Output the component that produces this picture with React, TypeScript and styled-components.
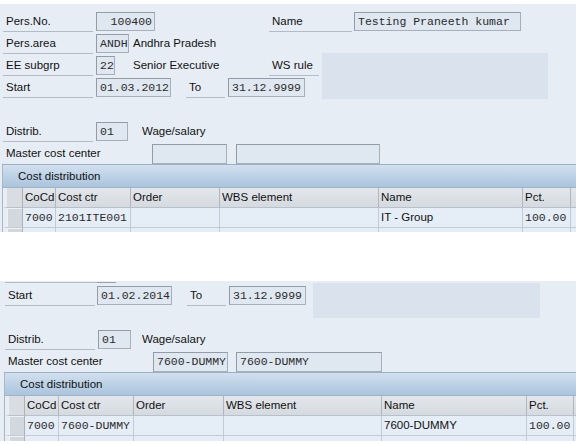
import React from "react";
import styled, { createGlobalStyle } from "styled-components";

const GlobalStyle = createGlobalStyle`
  html, body {
    margin: 0;
    padding: 0;
    background: #ffffff;
  }
  body {
    font-family: "Liberation Sans", Arial, sans-serif;
    font-size: 11.5px;
    color: #111;
  }
`;

const Page = styled.div`
  width: 576px;
  height: 444px;
  overflow: hidden;
  display: flex;
  flex-direction: column;
`;

const Panel = styled.section<{ $h: number; $pad: number; $mt: number; $pt?: number }>`
  height: ${(p) => p.$h}px;
  margin-top: ${(p) => p.$mt}px;
  padding-left: ${(p) => p.$pad}px;
  padding-top: ${(p) => p.$pt ?? 0}px;
  box-sizing: border-box;
  background: #e7edf4;
  overflow: hidden;
  flex-shrink: 0;
`;

const Row = styled.div<{ $h?: number; $mt?: number; $end?: boolean }>`
  display: flex;
  align-items: ${(p) => (p.$end ? "flex-end" : "center")};
  height: ${(p) => p.$h ?? 22}px;
  margin-top: ${(p) => p.$mt ?? 0}px;
  flex-shrink: 0;
`;

const Label = styled.div<{ $w: number; $ml?: number; $plain?: boolean }>`
  width: ${(p) => p.$w}px;
  margin-left: ${(p) => p.$ml ?? 0}px;
  height: 100%;
  box-sizing: border-box;
  padding-left: 3px;
  display: flex;
  align-items: center;
  white-space: nowrap;
  flex-shrink: 0;
  border-bottom: 1px solid ${(p) => (p.$plain ? "transparent" : "#b3bcc6")};
`;

const Field = styled.div<{ $w: number; $ml?: number; $h?: number; $right?: boolean }>`
  width: ${(p) => p.$w}px;
  height: ${(p) => p.$h ?? 19}px;
  margin-left: ${(p) => p.$ml ?? 0}px;
  box-sizing: border-box;
  flex-shrink: 0;
  border: 1px solid #a7afb8;
  border-top-color: #939ca6;
  border-left-color: #939ca6;
  background: #dfe7f0;
  color: #2b2b2b;
  font-family: "Liberation Mono", "Courier New", monospace;
  font-size: 11.5px;
  line-height: ${(p) => (p.$h ?? 19) - 2}px;
  padding: 0 2px 0 3px;
  text-align: ${(p) => (p.$right ? "right" : "left")};
  white-space: nowrap;
  overflow: hidden;
`;

const Desc = styled.span<{ $w?: number; $ml?: number }>`
  margin-left: ${(p) => p.$ml ?? 0}px;
  width: ${(p) => (p.$w ? `${p.$w}px` : "auto")};
  white-space: nowrap;
  flex-shrink: 0;
`;

const Split = styled.div`
  display: flex;
  align-items: flex-start;
  flex-shrink: 0;
`;

const Column = styled.div<{ $w: number; $mt?: number }>`
  width: ${(p) => p.$w}px;
  margin-top: ${(p) => p.$mt ?? 0}px;
  display: flex;
  flex-direction: column;
  flex-shrink: 0;
`;

const InfoBox = styled.div<{ $w: number; $h: number; $ml: number; $mt?: number }>`
  width: ${(p) => p.$w}px;
  height: ${(p) => p.$h}px;
  margin-left: ${(p) => p.$ml}px;
  margin-top: ${(p) => p.$mt ?? 0}px;
  background: #dae3ed;
  flex-shrink: 0;
`;

const Stub = styled.div`
  display: flex;
  height: 2px;
  flex-shrink: 0;
`;

const StubLine = styled.div<{ $w: number; $dark?: boolean }>`
  width: ${(p) => p.$w}px;
  height: 2px;
  box-sizing: border-box;
  border-bottom: 1px solid ${(p) => (p.$dark ? "#98a1ab" : "#b3bcc6")};
`;

const Table = styled.div`
  margin-left: -1px;
  width: max-content;
  border-top: 1px solid #9aafc3;
  border-left: 1px solid #a9b6c3;
`;

const TitleBar = styled.div`
  height: 23px;
  line-height: 23px;
  padding-left: 15px;
  background: linear-gradient(#d2e0ee, #b9cfe4 60%, #abc5dd);
  border-bottom: 1px solid #9fb3c6;
  box-sizing: border-box;
  width: 580px;
`;

const Grid = styled.div<{ $cols: string }>`
  display: grid;
  grid-template-columns: ${(p) => p.$cols};
`;

const HeadCell = styled.div`
  height: 20px;
  line-height: 19px;
  box-sizing: border-box;
  padding-left: 2px;
  background: linear-gradient(#e3e7eb, #d5dae0);
  border-right: 1px solid #aeb6bf;
  border-bottom: 1px solid #b8c0c8;
  white-space: nowrap;
  overflow: hidden;
`;

const Cell = styled.div<{ $sans?: boolean }>`
  height: 20px;
  line-height: 19px;
  box-sizing: border-box;
  padding-left: 2px;
  background: #e5edf6;
  border-right: 1px solid #c3ccd6;
  border-bottom: 1px solid #c3ccd6;
  color: ${(p) => (p.$sans ? "#111" : "#2b2b2b")};
  font-family: ${(p) =>
    p.$sans ? '"Liberation Sans", Arial, sans-serif' : '"Liberation Mono", "Courier New", monospace'};
  font-size: 11.5px;
  white-space: nowrap;
  overflow: hidden;
`;

const SelCell = styled.div<{ $head?: boolean }>`
  height: 20px;
  box-sizing: border-box;
  border-left: 4px solid #e9eef4;
  border-bottom: 1px solid ${(p) => (p.$head ? "#b8c0c8" : "#c3ccd6")};
  border-right: 1px solid #aab2bb;
  background: ${(p) => (p.$head ? "#d9dde2" : "#d2d8de")};
  box-shadow: ${(p) => (p.$head ? "none" : "inset 1px 1px 0 #eef2f6")};
`;

const COLS_TOP = "20px 33px 75px 89px 159px 144px 48px 60px";
const COLS_BOTTOM = "20px 34px 75px 90px 158px 145px 47px 60px";

const headers = ["CoCd", "Cost ctr", "Order", "WBS element", "Name", "Pct.", ""];

type Line = { cocd: string; ctr: string; name: string; pct: string };

const CostTable = ({ cols, line }: { cols: string; line: Line }) => (
  <Table>
    <TitleBar>Cost distribution</TitleBar>
    <Grid $cols={cols}>
      <SelCell $head />
      {headers.map((h, i) => (
        <HeadCell key={i}>{h}</HeadCell>
      ))}
      <SelCell />
      <Cell>{line.cocd}</Cell>
      <Cell>{line.ctr}</Cell>
      <Cell />
      <Cell />
      <Cell $sans>{line.name}</Cell>
      <Cell>{line.pct}</Cell>
      <Cell />
      <SelCell />
      {headers.map((_, i) => (
        <Cell key={i} />
      ))}
    </Grid>
  </Table>
);

const App = () => {
  return (
    <>
      <GlobalStyle />
      <Page>
        <Panel $h={228} $pad={3} $mt={4} $pt={6}>
          <Row>
            <Label $w={90}>Pers.No.</Label>
            <Field $w={59} $ml={3} $right>
              100400
            </Field>
            <Label $w={83} $ml={114}>
              Name
            </Label>
            <Field $w={167} $ml={2}>
              Testing Praneeth kumar
            </Field>
          </Row>
          <Row>
            <Label $w={90}>Pers.area</Label>
            <Field $w={33} $ml={3}>
              ANDH
            </Field>
            <Desc $ml={4}>Andhra Pradesh</Desc>
          </Row>
          <Split>
            <Column $w={316}>
              <Row>
                <Label $w={90}>EE subgrp</Label>
                <Field $w={19} $ml={3}>
                  22
                </Field>
                <Desc $ml={18} $w={136}>
                  Senior Executive
                </Desc>
                <Label $w={50}>WS rule</Label>
              </Row>
              <Row>
                <Label $w={90}>Start</Label>
                <Field $w={75} $ml={3}>
                  01.03.2012
                </Field>
                <Label $w={39} $ml={15}>
                  To
                </Label>
                <Field $w={77} $ml={3}>
                  31.12.9999
                </Field>
              </Row>
            </Column>
            <InfoBox $w={226} $h={46} $ml={3} $mt={-1} />
          </Split>
          <Row $mt={21}>
            <Label $w={90}>Distrib.</Label>
            <Field $w={32} $ml={3}>
              01
            </Field>
            <Desc $ml={14}>Wage/salary</Desc>
          </Row>
          <Row $end>
            <Label $w={145} $plain>
              Master cost center
            </Label>
            <Field $w={75} $ml={4} $h={20} />
            <Field $w={144} $ml={9} $h={20} />
          </Row>
          <CostTable
            cols={COLS_TOP}
            line={{ cocd: "7000", ctr: "2101ITE001", name: "IT - Group", pct: "100.00" }}
          />
        </Panel>

        <Panel $h={160} $pad={5} $mt={49}>
          <Stub>
            <StubLine $w={92} />
            <StubLine $w={19} $dark />
          </Stub>
          <Split>
            <Column $w={301} $mt={1}>
              <Row>
                <Label $w={90}>Start</Label>
                <Field $w={75} $ml={2}>
                  01.02.2014
                </Field>
                <Label $w={39} $ml={15}>
                  To
                </Label>
                <Field $w={77} $ml={3}>
                  31.12.9999
                </Field>
              </Row>
            </Column>
            <InfoBox $w={227} $h={35} $ml={7} />
          </Split>
          <Row $mt={10}>
            <Label $w={90}>Distrib.</Label>
            <Field $w={33} $ml={3}>
              01
            </Field>
            <Desc $ml={11}>Wage/salary</Desc>
          </Row>
          <Row $end>
            <Label $w={145} $plain>
              Master cost center
            </Label>
            <Field $w={75} $ml={3} $h={20} $right>
              7600-DUMMY
            </Field>
            <Field $w={146} $ml={8} $h={20}>
              7600-DUMMY
            </Field>
          </Row>
          <CostTable
            cols={COLS_BOTTOM}
            line={{ cocd: "7000", ctr: "7600-DUMMY", name: "7600-DUMMY", pct: "100.00" }}
          />
        </Panel>
      </Page>
    </>
  );
};

export default App;
